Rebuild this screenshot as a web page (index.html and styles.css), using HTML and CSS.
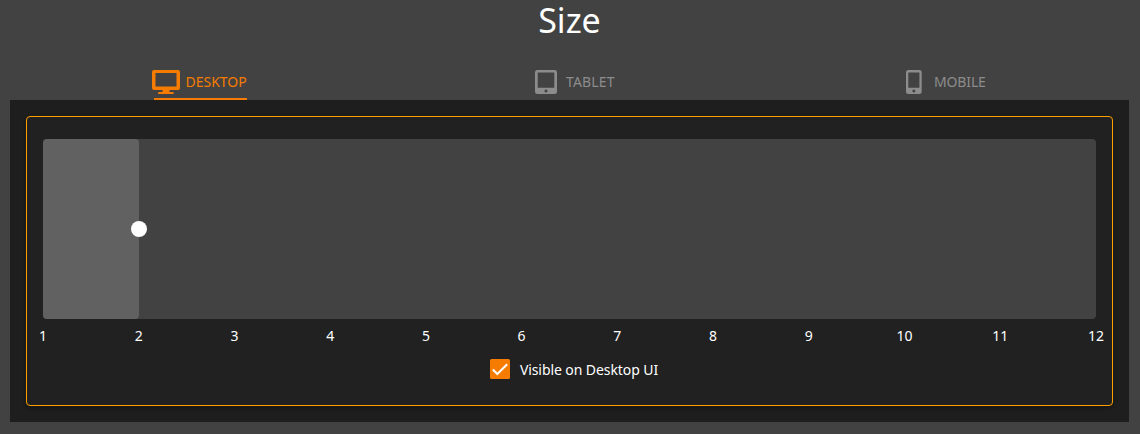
FILE: index.html
```html
<!DOCTYPE html>
<html lang="en">
<head>
<meta charset="utf-8">
<title>Size</title>
<link rel="stylesheet" href="styles.css">
</head>
<body>
<h1 class="title">Size</h1>
<nav class="tabs">
  <a class="tab tab-desktop active">
    <svg class="icon" width="28" height="24" viewBox="0 0 28 24"><path fill="currentColor" fill-rule="evenodd" d="M2 0H26Q28 0 28 2V18Q28 20 26 20H17.500V22H20.500Q21.700 22 21.700 23V24H6V23Q6 22 7.200 22H10.500V20H2Q0 20 0 18V2Q0 0 2 0ZM3.500 3V16.500H24.500V3Z"/></svg>
    <span class="label">DESKTOP</span>
  </a>
  <a class="tab tab-tablet">
    <svg class="icon" width="22" height="24" viewBox="0 0 22 24"><path fill="currentColor" fill-rule="evenodd" d="M2.500 0H19.500Q22 0 22 2.500V21.500Q22 24 19.500 24H2.500Q0 24 0 21.500V2.500Q0 0 2.500 0ZM2.700 2.500V17.800H19.300V2.500ZM11 19.500a1.500 1.500 0 1 0 .01 0Z"/></svg>
    <span class="label">TABLET</span>
  </a>
  <a class="tab tab-mobile">
    <svg class="icon" width="16" height="24" viewBox="0 0 16 24"><path fill="currentColor" fill-rule="evenodd" d="M2.500 0H13.200Q15.700 0 15.700 2.500V21.500Q15.700 24 13.200 24H2.500Q0 24 0 21.500V2.500Q0 0 2.500 0ZM2.300 2.500V17.800H13.400V2.500ZM7.850 19.500a1.500 1.500 0 1 0 .01 0Z"/></svg>
    <span class="label">MOBILE</span>
  </a>
</nav>
<main class="panel">
  <section class="card">
    <div class="slider"><div class="fill"><span class="thumb"></span></div></div>
    <div class="ticks">
      <span>1</span><span>2</span><span>3</span><span>4</span><span>5</span><span>6</span><span>7</span><span>8</span><span>9</span><span>10</span><span>11</span><span>12</span>
    </div>
    <div class="visible">
      <svg class="check" width="20" height="20" viewBox="0 0 20 20"><rect width="20" height="20" rx="1.500" fill="#f57c00"/><path d="M2.800 10.500 7.300 15 17.200 5.200" fill="none" stroke="#fff" stroke-width="2"/></svg>
      <span class="visible-text">Visible on Desktop UI</span>
    </div>
  </section>
</main>
</body>
</html>
```
FILE: styles.css
```css
* { box-sizing: border-box; }
body {
  margin: 0;
  height: 434px;
  overflow: hidden;
  padding: 0 11px 0 10px;
  background: #424242;
  color: #fff;
  font-family: "Noto Sans", "Open Sans", sans-serif;
  font-size: 14px;
}
.title {
  margin: 0;
  height: 64px;
  font-size: 34px;
  font-weight: 400;
  line-height: 40px;
  text-align: center;
}
.tabs {
  display: grid;
  grid-template-columns: repeat(3, 1fr);
  height: 36px;
}
.tab {
  position: relative;
  display: flex;
  align-items: flex-start;
  padding-top: 6px;
  color: #8c8c8c;
}
.tab-desktop { padding-left: 142px; }
.tab-tablet { padding-left: 152px; }
.tab-mobile { padding-left: 150px; }
.icon { flex: none; }
.label { margin-left: 5.500px; line-height: 24px; }
.tab-tablet .label { margin-left: 9px; letter-spacing: .15px; }
.tab-mobile .label { margin-left: 12px; letter-spacing: -.15px; }
.active { color: #f57c00; }
.active::after {
  content: "";
  position: absolute;
  left: 144px;
  bottom: 0;
  width: 93px;
  height: 2px;
  background: #f57c00;
}
.panel {
  height: 322px;
  padding: 16px;
  background: #1e1e1e;
}
.card {
  height: 290px;
  padding: 22px 16px;
  border: 1px solid #ffa000;
  border-radius: 4px;
  background: #212121;
  box-shadow: 0 2px 4px rgba(0, 0, 0, .3);
}
.slider {
  height: 180px;
  border-radius: 4px;
  background: #424242;
}
.fill {
  position: relative;
  width: 96px;
  height: 180px;
  border-radius: 4px;
  background: #616161;
}
.thumb {
  position: absolute;
  right: -8px;
  top: 82px;
  width: 16px;
  height: 16px;
  border-radius: 50%;
  background: #fff;
}
.ticks {
  display: flex;
  justify-content: space-between;
  height: 40px;
  line-height: 34px;
}
.ticks span {
  display: flex;
  justify-content: center;
  width: 0;
}
.visible {
  display: flex;
  justify-content: center;
  gap: 10px;
  padding-left: 9px;
  line-height: 22px;
}
.visible-text { letter-spacing: -.08px; }
```
